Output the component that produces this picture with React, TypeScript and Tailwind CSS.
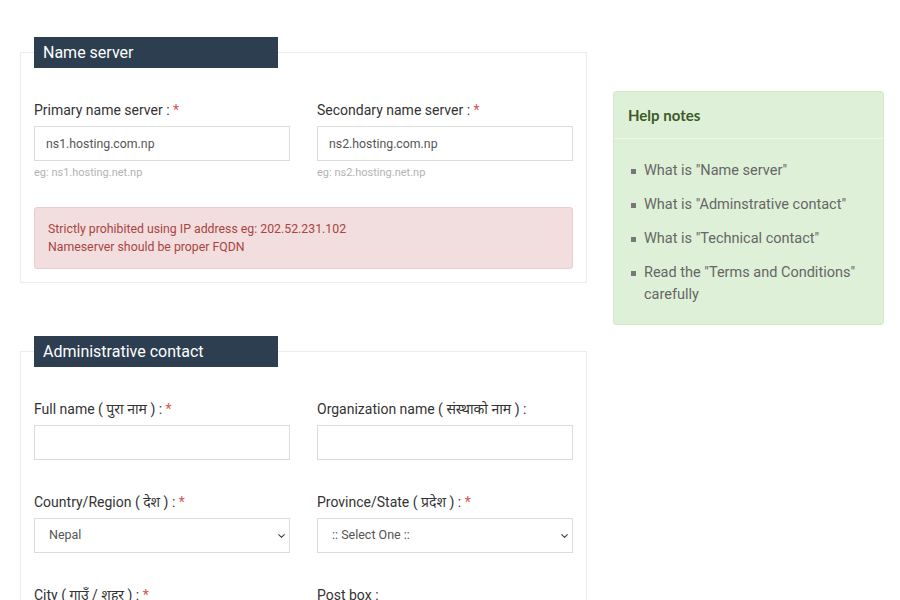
import { ChevronDown } from "lucide-react";

const font = { fontFamily: "Roboto, 'Noto Sans', sans-serif" };

const Req = () => <span className="text-[#d9534f]">*</span>;

const Label = ({ children }: { children: React.ReactNode }) => (
  <label className="block text-[14px] leading-[20px] text-[#333] mb-[6px]">{children}</label>
);

const TextInput = ({ value = "" }: { value?: string }) => (
  <input
    readOnly
    value={value}
    className="block w-full h-[35px] border border-[#dcdcdc] bg-white px-[11px] text-[12.3px] text-[#555] outline-none"
  />
);

const Select = ({ value }: { value: string }) => (
  <div className="relative">
    <select className="block w-full h-[35px] appearance-none border border-[#dcdcdc] bg-white pl-[14px] pr-8 text-[12.5px] text-[#555] outline-none">
      <option>{value}</option>
    </select>
    <ChevronDown className="pointer-events-none absolute right-[3px] top-1/2 -translate-y-1/2 h-[11px] w-[11px] text-[#444]" strokeWidth={2.5} />
  </div>
);

const Legend = ({ children }: { children: React.ReactNode }) => (
  <legend className="w-[244px] h-[31px] bg-[#2c3e50] px-[9px] text-[16px] leading-[31px] text-white">{children}</legend>
);

export default function App() {
  const notes = [
    'What is "Name server"',
    'What is "Adminstrative contact"',
    'What is "Technical contact"',
    'Read the "Terms and Conditions" carefully',
  ];

  return (
    <div className="h-[600px] overflow-hidden bg-white pt-[37px] pl-[20px]" style={font}>
      <div className="flex gap-[26px] items-start">
        <div className="w-[567px] flex flex-col gap-[53px]">
          <fieldset className="border border-[#ececec] px-[13px] pb-[13px]">
            <Legend>Name server</Legend>
            <div className="grid grid-cols-2 gap-x-[27px] mt-[32px]">
              <div>
                <Label>
                  Primary name server : <Req />
                </Label>
                <TextInput value="ns1.hosting.com.np" />
                <p className="mt-[4px] text-[11px] leading-[16px] text-[#b3b3b3]">eg: ns1.hosting.net.np</p>
              </div>
              <div>
                <Label>
                  Secondary name server : <Req />
                </Label>
                <TextInput value="ns2.hosting.com.np" />
                <p className="mt-[4px] text-[11px] leading-[16px] text-[#b3b3b3]">eg: ns2.hosting.net.np</p>
              </div>
            </div>
            <div className="mt-[26px] rounded-[3px] border border-[#ebccd1] bg-[#f2dede] px-[13px] py-[12px] text-[12.3px] leading-[18px] text-[#a94442]">
              Strictly prohibited using IP address eg: 202.52.231.102
              <br />
              Nameserver should be proper FQDN
            </div>
          </fieldset>

          <fieldset className="border border-[#ececec] px-[13px] pb-[13px]">
            <Legend>Administrative contact</Legend>
            <div className="grid grid-cols-2 gap-x-[27px] gap-y-[32px] mt-[32px]">
              <div>
                <Label>
                  Full name ( पुरा नाम ) : <Req />
                </Label>
                <TextInput />
              </div>
              <div>
                <Label>Organization name ( संस्थाको नाम ) :</Label>
                <TextInput />
              </div>
              <div>
                <Label>
                  Country/Region ( देश ) : <Req />
                </Label>
                <Select value="Nepal" />
              </div>
              <div>
                <Label>
                  Province/State ( प्रदेश ) : <Req />
                </Label>
                <Select value=":: Select One ::" />
              </div>
              <div>
                <Label>
                  City ( गाउँ / शहर ) : <Req />
                </Label>
                <TextInput />
              </div>
              <div>
                <Label>Post box :</Label>
                <TextInput />
              </div>
            </div>
          </fieldset>
        </div>

        <div className="mt-[54px] w-[271px] rounded-[3px] border border-[#d6e9c6] bg-[#dff0d8]">
          <div className="px-[14px] h-[47px] flex items-center border-b border-[#eef7ea]">
            <h3 className="text-[15px] font-bold text-[#3c5a28]" style={{ fontFamily: "Lato, sans-serif" }}>
              Help notes
            </h3>
          </div>
          <ul className="px-[14px] pt-[21px] pb-[18px] flex flex-col gap-[12px]">
            {notes.map((n) => (
              <li key={n} className="flex text-[14.5px] leading-[22px] text-[#666]">
                <span className="mt-[9px] mr-[8px] ml-[3px] h-[5px] w-[5px] shrink-0 bg-[#777]" />
                <span>{n}</span>
              </li>
            ))}
          </ul>
        </div>
      </div>
    </div>
  );
}
